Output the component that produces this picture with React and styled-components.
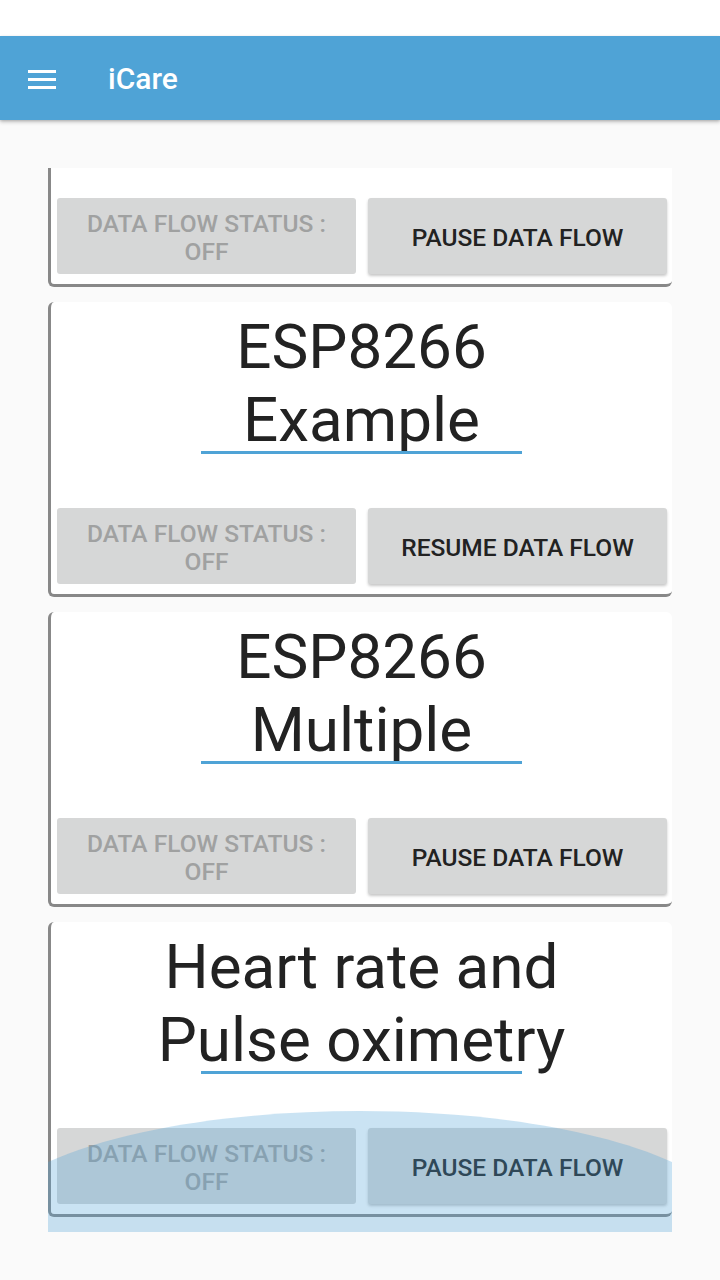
import React from 'react'
import styled, { createGlobalStyle } from 'styled-components'

const Global = createGlobalStyle`
  html, body {
    margin: 0;
    padding: 0;
    background: #fafafa;
    font-family: Roboto, 'Liberation Sans', sans-serif;
  }
`

const Screen = styled.div`
  width: 720px;
  height: 1280px;
  display: flex;
  flex-direction: column;
  background: #fafafa;
  overflow: hidden;
`

const StatusBar = styled.div`
  height: 36px;
  background: #ffffff;
  flex-shrink: 0;
`

const AppBar = styled.header`
  height: 84px;
  flex-shrink: 0;
  display: flex;
  align-items: center;
  background: #4fa3d6;
  box-shadow: 0 2px 4px rgba(0, 0, 0, 0.22), 0 1px 2px rgba(0, 0, 0, 0.12);
  position: relative;
  z-index: 1;
`

const MenuButton = styled.div`
  width: 36px;
  height: 36px;
  margin-left: 24px;
  display: flex;
  align-items: center;
  justify-content: center;
`

const Title = styled.h1`
  margin: 0 0 0 48px;
  color: #ffffff;
  font-size: 30px;
  font-weight: 500;
  font-family: Roboto, 'Liberation Sans', sans-serif;
`

const List = styled.div`
  position: relative;
  margin: 48px 48px 0;
  height: 1064px;
  overflow: hidden;
  display: flex;
  flex-direction: column;
  gap: 15px;
`

const Card = styled.section`
  background: #ffffff;
  border-left: 3px solid #888888;
  border-bottom: 3px solid #888888;
  border-radius: ${p => (p.partial ? '0 0 6px 6px' : '6px')};
  padding-top: ${p => (p.partial ? '30px' : '8px')};
  padding-bottom: 10px;
  display: flex;
  flex-direction: column;
  align-items: center;
  flex-shrink: 0;
`

const DeviceName = styled.h2`
  margin: 0;
  width: 100%;
  font-family: Roboto, 'Liberation Sans', sans-serif;
  font-weight: 400;
  font-size: 62px;
  line-height: 73px;
  color: #222222;
  text-align: center;
  white-space: pre-line;
`

const Underline = styled.div`
  width: 321px;
  height: 3px;
  margin-top: -5px;
  margin-bottom: 54px;
  background: #4fa3d6;
`

const ButtonRow = styled.div`
  align-self: stretch;
  display: grid;
  grid-template-columns: 1fr 1fr;
  gap: 12px;
  padding: 0 5px 0 6px;
`

const Button = styled.button`
  height: 76px;
  border: none;
  border-radius: 3px;
  background: #d6d7d7;
  font-family: Roboto, 'Liberation Sans', sans-serif;
  font-weight: 500;
  font-size: 24.5px;
  line-height: 28px;
  text-transform: uppercase;
  color: ${p => (p.disabled ? '#a0a1a1' : '#222222')};
  box-shadow: ${p => (p.disabled ? 'none' : '0 2px 3px rgba(0, 0, 0, 0.22)')};
  padding: 4px 8px 0;
`

const Glow = styled.svg`
  position: absolute;
  left: 0;
  bottom: 0;
  width: 624px;
  height: 121px;
  pointer-events: none;
`

const MenuIcon = () => (
  <svg width="28" height="24" viewBox="0 0 28 24">
    <rect x="0" y="4" width="28" height="3" fill="#fff" />
    <rect x="0" y="12" width="28" height="3" fill="#fff" />
    <rect x="0" y="20" width="28" height="3" fill="#fff" />
  </svg>
)

const devices = [
  { name: 'ESP8266\nExample', action: 'Resume Data Flow' },
  { name: 'ESP8266\nMultiple', action: 'Pause Data Flow' },
  { name: 'Heart rate and\nPulse oximetry', action: 'Pause Data Flow' }
]

const Controls = ({ action }) =>
  <ButtonRow>
    <Button disabled>Data flow status :<br />off</Button>
    <Button>{action}</Button>
  </ButtonRow>

export default function App () {
  return (
    <Screen>
      <Global />
      <StatusBar />
      <AppBar>
        <MenuButton><MenuIcon /></MenuButton>
        <Title>iCare</Title>
      </AppBar>

      <List>
        <Card partial>
          <Controls action="Pause Data Flow" />
        </Card>

        {devices.map(d =>
          <Card key={d.name}>
            <DeviceName>{d.name}</DeviceName>
            <Underline />
            <Controls action={d.action} />
          </Card>
        )}

        <Glow viewBox="0 0 624 121" preserveAspectRatio="none">
          <path d="M0 51 C 150 -17, 474 -17, 624 51 L624 121 L0 121 Z" fill="rgba(79, 163, 214, 0.3)" />
        </Glow>
      </List>
    </Screen>
  )
}
